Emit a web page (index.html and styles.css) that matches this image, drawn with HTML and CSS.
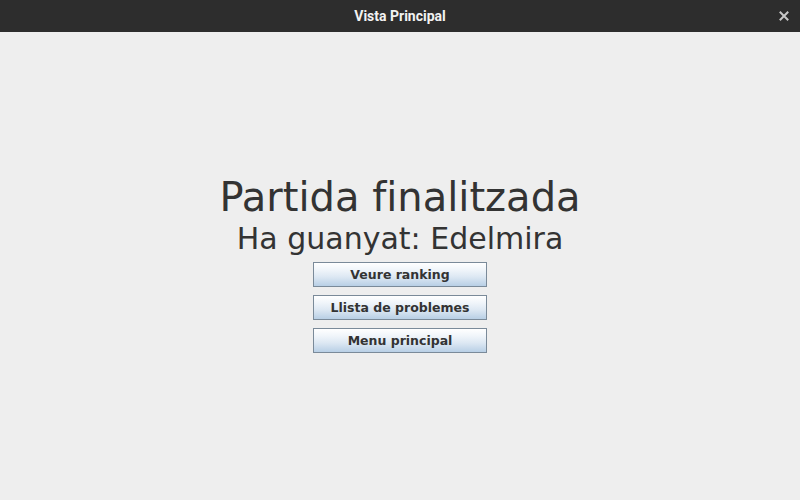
FILE: index.html
```html
<!DOCTYPE html>
<html>
<head>
<meta charset="utf-8">
<link rel="stylesheet" href="styles.css">
</head>
<body>
<div class="window">
  <div class="titlebar">
    <span class="title">Vista Principal</span>
    <span class="close">
      <svg width="10" height="10" viewBox="0 0 10 10"><path d="M1.5 1.5 L8.5 8.5 M8.5 1.5 L1.5 8.5" stroke="#c8c8c8" stroke-width="2" stroke-linecap="square"/></svg>
    </span>
  </div>
  <div class="content">
    <div class="heading">Partida finalitzada</div>
    <div class="winner">Ha guanyat: Edelmira</div>
    <div class="buttons">
      <button class="btn">Veure ranking</button>
      <button class="btn">Llista de problemes</button>
      <button class="btn">Menu principal</button>
    </div>
  </div>
</div>
</body>
</html>
```
FILE: styles.css
```css
html, body {
  margin: 0;
  padding: 0;
  width: 800px;
  height: 500px;
  overflow: hidden;
  background: #eeeeee;
}
.window {
  display: flex;
  flex-direction: column;
  width: 800px;
  height: 500px;
}
.titlebar {
  position: relative;
  height: 32px;
  flex: none;
  background: #2d2d2d;
  display: flex;
  align-items: center;
  justify-content: center;
}
.title {
  font-family: Roboto, "Liberation Sans", sans-serif;
  font-weight: bold;
  font-size: 14px;
  color: #f2f2f2;
}
.close {
  position: absolute;
  right: 11px;
  top: 11px;
  width: 10px;
  height: 10px;
  display: flex;
}
.content {
  flex: 1;
  display: flex;
  flex-direction: column;
  align-items: center;
  justify-content: center;
  padding-bottom: 5px;
  font-family: "DejaVu Sans", sans-serif;
  font-variant-ligatures: none;
  color: #333333;
}
.heading {
  font-size: 40px;
  line-height: 47px;
}
.winner {
  font-size: 30px;
  line-height: 35px;
}
.buttons {
  margin-top: 6px;
  display: flex;
  flex-direction: column;
  gap: 8px;
}
.btn {
  width: 174px;
  height: 25px;
  margin: 0;
  padding: 0;
  border: 1px solid #7a8a99;
  background: linear-gradient(to bottom, #ffffff 0%, #f0f5fa 30%, #dde8f3 60%, #b8cfe5 100%);
  font-family: "DejaVu Sans", sans-serif;
  font-variant-ligatures: none;
  font-weight: bold;
  font-size: 12.5px;
  color: #333333;
}
```
